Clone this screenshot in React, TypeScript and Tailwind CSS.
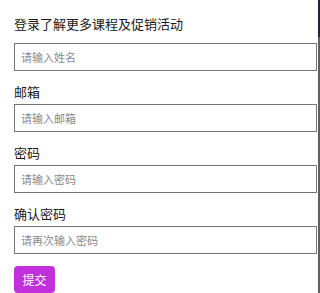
import React from "react";

const fields = [
  { label: "邮箱", ph: "请输入邮箱", type: "email" },
  { label: "密码", ph: "请输入密码", type: "password" },
  { label: "确认密码", ph: "请再次输入密码", type: "password" },
];

export default function App() {
  return (
    <div
      className="flex h-[293px] w-[320px] overflow-hidden bg-white"
      style={{ fontFamily: '"Noto Sans CJK SC", "Noto Sans", sans-serif' }}
    >
      <div className="flex flex-1 flex-col pl-[14px] pr-[0px] pt-[14px]">
        <div className="h-[20px] text-[13px] leading-[20px] text-[#1a1a1a]">
          登录了解更多课程及促销活动
        </div>
        <input
          className="mt-[9px] h-[28px] w-[303px] border border-[#767676] px-[6px] text-[11px] outline-none placeholder:text-[#8a8a8a]"
          placeholder="请输入姓名"
        />
        {fields.map((f) => (
          <div key={f.label} className="flex flex-col">
            <label className="mt-[11px] mb-[2px] h-[20px] text-[13px] leading-[20px] text-[#1a1a1a]">
              {f.label}
            </label>
            <input
              type={f.type}
              className="h-[28px] w-[303px] border border-[#767676] px-[6px] text-[11px] outline-none placeholder:text-[#8a8a8a]"
              placeholder={f.ph}
            />
          </div>
        ))}
        <button className="mt-[12px] flex h-[27px] w-[41px] items-center justify-center rounded-[4px] bg-[#c22fdd] text-[12px] text-white">
          提交
        </button>
      </div>
      <div className="flex w-[2px] flex-col">
        <div className="h-[37px] bg-[#1c2540]" />
        <div className="flex-1 bg-[#606060]" />
      </div>
    </div>
  );
}
